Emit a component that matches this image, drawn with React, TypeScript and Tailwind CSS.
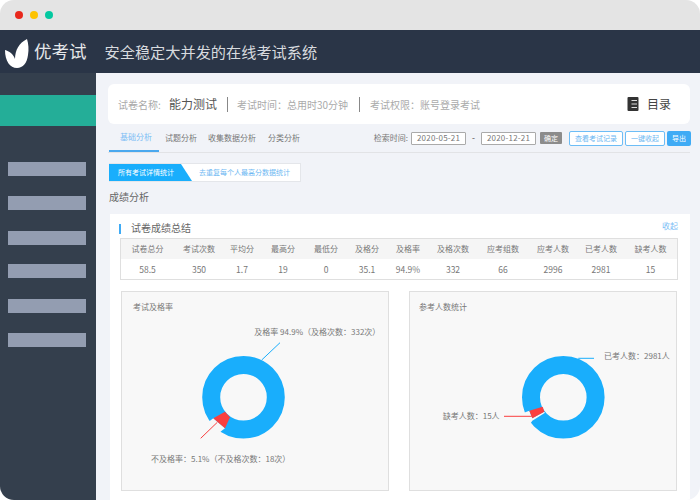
const font = { fontFamily: '"Noto Sans CJK SC", "Noto Sans", sans-serif' };

const menuBars = ["mt-9", "mt-5", "mt-[21px]", "mt-[19px]", "mt-[21px]", "mt-5"];
const tabs = [
  { label: "试题分析", cls: "ml-[6px]" },
  { label: "收集数据分析", cls: "ml-[11px]" },
  { label: "分类分析", cls: "ml-3" },
];
const stats = [
  ["试卷总分", "58.5"],
  ["考试次数", "350"],
  ["平均分", "1.7"],
  ["最高分", "19"],
  ["最低分", "0"],
  ["及格分", "35.1"],
  ["及格率", "94.9%"],
  ["及格次数", "332"],
  ["应考组数", "66"],
  ["应考人数", "2996"],
  ["已考人数", "2981"],
  ["缺考人数", "15"],
];

function Logo() {
  return (
    <svg width="26" height="32" viewBox="0 0 26 32" className="ml-1 mt-[3px] shrink-0">
      <path
        d="M23 2C24.5 7 25 12 24 18C23 26 19 31 13 31C6 31 1 24 1 13C5 14 9.5 17 11 22C11 13 15 6 23 2Z"
        fill="#fff"
      />
    </svg>
  );
}

function BookIcon() {
  return (
    <svg width="12" height="14" viewBox="0 0 12 14" className="shrink-0">
      <rect x="0.5" width="11" height="14" rx="1" fill="#333" />
      <path d="M4.5 3.5H10M4.5 7H10M4.5 10.5H10" stroke="#ddd" strokeWidth="1" />
    </svg>
  );
}

// ring first, then the notch in panel colour, then the red slice on top
function Donut({ cx, wedge, gap, children }: { cx: number; wedge: string; gap: string; children: React.ReactNode }) {
  return (
    <svg width="266" height="198" viewBox="0 0 266 198" className="block">
      <circle cx={cx} cy="105.2" r="32.3" fill="none" stroke="#19aefc" strokeWidth="18" />
      <path d={gap} fill="#f8f8f8" />
      <path d={wedge} fill="#fa3f3f" />
      {children}
    </svg>
  );
}

function ChartPanel({ title, cls, titleCls, children }: { title: string; cls: string; titleCls: string; children: React.ReactNode }) {
  return (
    <div className={`relative h-[200px] border border-[#dfdfdf] bg-[#f8f8f8] ${cls}`}>
      <div className={`absolute top-[9px] text-[8px] leading-3 text-[#777] ${titleCls}`}>{title}</div>
      {children}
    </div>
  );
}

export default function App() {
  return (
    <div className="h-[500px] w-[700px] overflow-hidden bg-white" style={font}>
      <div className="flex h-full flex-col overflow-hidden rounded-[14px]">
        <div className="flex h-[30px] shrink-0 items-center gap-[7px] bg-[#e4e4e4] pl-[15px]">
          <span className="h-2 w-2 rounded-full bg-[#e8281c]" />
          <span className="h-2 w-2 rounded-full bg-[#fdc301]" />
          <span className="h-2 w-2 rounded-full bg-[#04c8a0]" />
        </div>

        <div className="flex h-[43px] shrink-0 items-center bg-[#2a3547]">
          <Logo />
          <span className="ml-1 -mt-px text-[17.5px] text-[#e6e8ea]">优考试</span>
          <span className="ml-[18px] -mt-px text-[15.2px] text-[#d8dbdf]">安全稳定大并发的在线考试系统</span>
        </div>

        <div className="flex min-h-0 flex-1">
          <div className="w-24 shrink-0 bg-[#343f4d] pt-[22px]">
            <div className="h-[31px] bg-[#24ae98]" />
            <div className="flex flex-col">
              {menuBars.map((m, i) => (
                <div key={i} className={`ml-2 h-[14px] w-[78px] bg-[#939db1] ${m}`} />
              ))}
            </div>
          </div>

          <div className="min-w-0 flex-1 bg-[#f1f3f8] pl-3 pr-2.5 pt-[11px]">
            <div className="flex h-10 items-center rounded-md bg-white pl-2.5 pr-[19px] text-[10px] text-[#aaa]">
              <span className="w-[51px]">试卷名称:</span>
              <span className="w-[58px] text-[12px] text-[#555]">能力测试</span>
              <span className="h-[15px] w-px bg-[#888]" />
              <span className="ml-[9px] w-[122px]">考试时间：总用时30分钟</span>
              <span className="h-[15px] w-px bg-[#888]" />
              <span className="ml-[10px]">考试权限：账号登录考试</span>
              <span className="ml-auto flex items-center gap-2 text-[12px] text-[#444]">
                <BookIcon />
                目录
              </span>
            </div>

            <div className="flex h-[29px] items-center border-b border-[#e2e3e6]">
              <div className="ml-px flex h-full w-[50px] items-center border-b-2 border-[#4aa8ee] pl-[11px] text-[8px] text-[#7bbdf5]">
                基础分析
              </div>
              {tabs.map((t) => (
                <span key={t.label} className={`text-[8px] text-[#777] ${t.cls}`}>
                  {t.label}
                </span>
              ))}
              <div className="-mr-px ml-auto flex items-center text-[8px] text-[#777]">
                <span className="mr-[3px]">检索时间:</span>
                <span className="flex h-[13px] w-[55px] items-center justify-center rounded-[1px] border border-[#aaa] bg-white text-[8px] tracking-wide">2020-05-21</span>
                <span className="mx-[6px] font-bold">-</span>
                <span className="flex h-[13px] w-[55px] items-center justify-center rounded-[1px] border border-[#aaa] bg-white text-[8px] tracking-wide">2020-12-21</span>
                <span className="ml-1 flex h-[12px] w-[22px] items-center justify-center rounded-[1px] bg-[#8c8c8c] text-[7px] text-white">确定</span>
                <span className="ml-[7px] flex h-[15px] w-[54px] items-center justify-center rounded-[2px] border border-[#6dbdf6] bg-white text-[7px] text-[#6db8f2]">查看考试记录</span>
                <span className="ml-[2px] flex h-[15px] w-10 items-center justify-center rounded-[2px] border border-[#6dbdf6] bg-white text-[7px] text-[#6db8f2]">一键收起</span>
                <span className="ml-[2px] flex h-[15px] w-6 items-center justify-center rounded-[2px] bg-[#3fabf5] text-[7px] text-white">导出</span>
              </div>
            </div>

            <div className="ml-px mt-[10px] flex h-[19px] w-[192px] overflow-hidden border-y border-r border-[#e4e6ea] bg-white text-[7px]">
              <div
                className="flex h-full w-[83px] items-center bg-[#19aefc] pl-[9px] text-white"
                style={{ clipPath: "polygon(0 0, 72px 0, 100% 100%, 0 100%)" }}
              >
                所有考试详情统计
              </div>
              <div className="ml-[7px] flex items-center text-[#6db8f2]">去重复每个人最高分数据统计</div>
            </div>

            <div className="ml-px mt-2 text-[10px] leading-[14px] text-[#666]">成绩分析</div>

            <div className="ml-0.5 mt-2.5 h-[286px] bg-white pl-2.5 pr-3 pt-[5px]">
              <div className="flex h-[19px] items-center">
                <span className="-ml-px mr-[10px] h-[10px] w-[2px] bg-[#3fabf5]" />
                <span className="-mt-0.5 text-[10px] text-[#666]">试卷成绩总结</span>
                <span className="-mt-1.5 ml-auto text-[8px] text-[#7bbdf5]">收起</span>
              </div>

              <div className="w-[558px] border border-[#dfdfdf] text-[8px] text-[#777]">
                <div className="grid h-5 grid-cols-[53px_50px_36px_46px_40px_42px_40px_50px_50px_50px_46px_53px] items-center bg-[#f5f5f5]">
                  {stats.map(([k]) => (
                    <span key={k} className="text-center">
                      {k}
                    </span>
                  ))}
                </div>
                <div className="grid h-[20px] grid-cols-[53px_50px_36px_46px_40px_42px_40px_50px_50px_50px_46px_53px] items-center bg-white">
                  {stats.map(([k, v]) => (
                    <span key={k} className="text-center text-[8.5px]">
                      {v}
                    </span>
                  ))}
                </div>
              </div>

              <div className="mt-[11px] flex">
                <ChartPanel title="考试及格率" cls="ml-px w-[268px]" titleCls="left-[11px]">
                  <Donut
                    cx={121.5}
                    gap="M88 128.7L91.3 126.3L103 136.3L99.7 138.7L91.3 146L80 135Z"
                    wedge="M91.3 126.3L103 119.7L108 125.3L103 136.3Z"
                  >
                    <path d="M139.7 68L158 50.7" stroke="#19aefc" strokeWidth="1" fill="none" />
                    <path d="M78.7 146.3L95.3 130.3" stroke="#fa3f3f" strokeWidth="1" fill="none" />
                    <text x="132.3" y="43" fontSize="8" fill="#777">及格率 94.9%（及格次数：332次）</text>
                    <text x="29" y="170" fontSize="8" fill="#777">不及格率：5.1%（不及格次数：18次）</text>
                  </Donut>
                </ChartPanel>
                <ChartPanel title="参考人数统计" cls="ml-5 w-[268px]" titleCls="left-[9px]">
                  <Donut
                    cx={153.3}
                    gap="M114 120.7L119.3 118.7L122.3 126.3L134 119.7L135 120.7L122.3 128.7L118 135L108 128Z"
                    wedge="M119.3 118.7L132.7 114.7L134.3 119.7L122.3 126.3Z"
                  >
                    <path d="M168.3 66.3H184" stroke="#19aefc" strokeWidth="1" fill="none" />
                    <path d="M94 124.3H121.7" stroke="#fa3f3f" strokeWidth="1" fill="none" />
                    <text x="194" y="67" fontSize="8" fill="#777">已考人数：2981人</text>
                    <text x="32.7" y="127.3" fontSize="8" fill="#777">缺考人数：15人</text>
                  </Donut>
                </ChartPanel>
              </div>
            </div>
          </div>
        </div>
      </div>
    </div>
  );
}
